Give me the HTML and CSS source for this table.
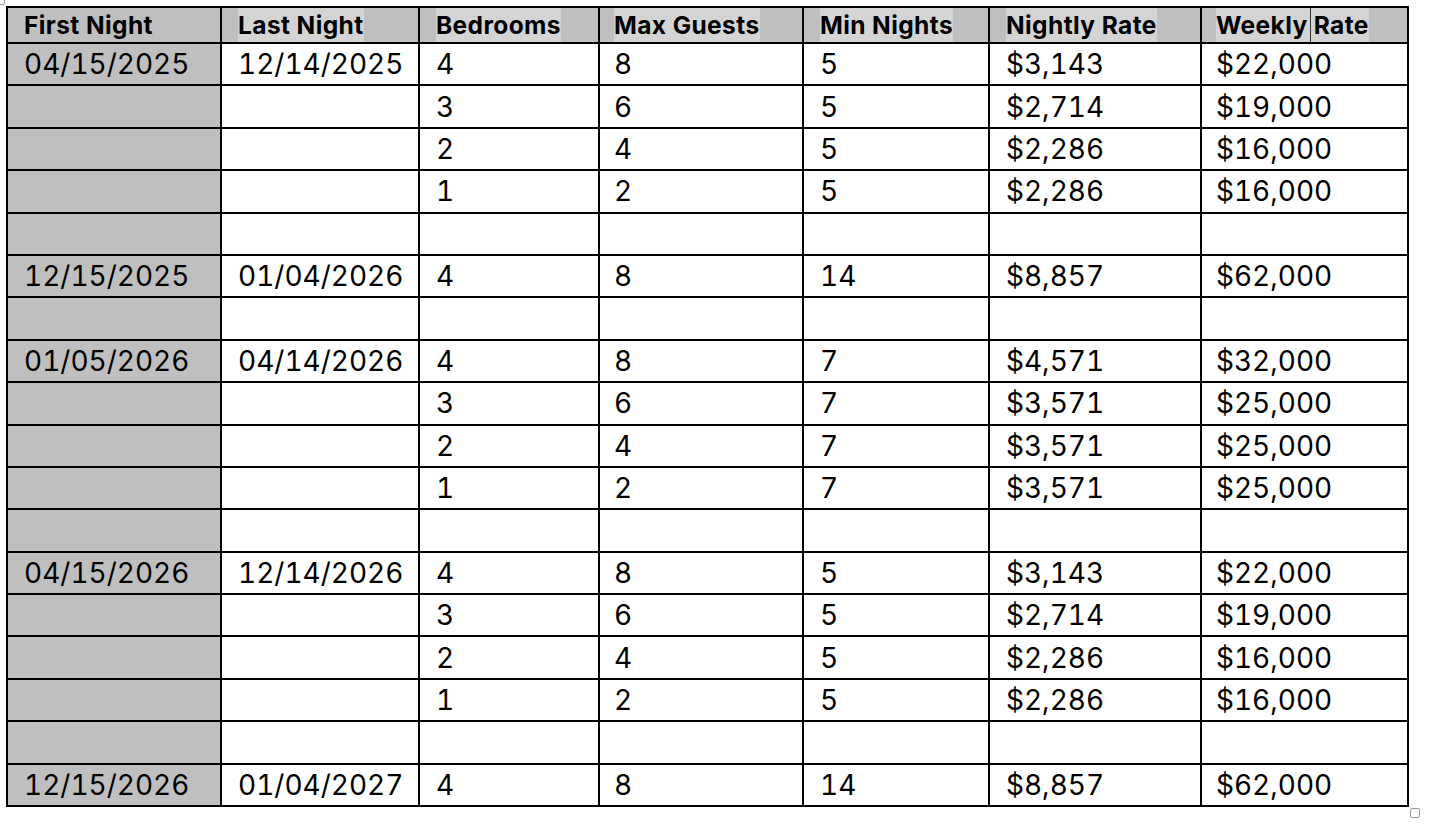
FILE: index.html
```html
<!DOCTYPE html>
<html>
<head>
<meta charset="utf-8">
<link rel="stylesheet" href="styles.css">
</head>
<body>
<div class="doc">
  <span class="handle handle-move"></span>
  <table class="rates">
    <colgroup>
      <col class="c1"><col class="c2"><col class="c3"><col class="c4"><col class="c5"><col class="c6"><col class="c7">
    </colgroup>
    <thead>
      <tr>
        <th>First Night</th>
        <th><span class="hl">Last Night</span></th>
        <th><span class="hl">Bedrooms</span></th>
        <th><span class="hl">Max Guests</span></th>
        <th><span class="hl">Min Nights</span></th>
        <th><span class="hl">Nightly Rate</span></th>
        <th><span class="hl">Weekly<span class="cursor">Rate</span></span></th>
      </tr>
    </thead>
    <tbody>
      <tr><td>04/15/2025</td><td>12/14/2025</td><td>4</td><td>8</td><td>5</td><td>$3,143</td><td>$22,000</td></tr>
      <tr><td></td><td></td><td>3</td><td>6</td><td>5</td><td>$2,714</td><td>$19,000</td></tr>
      <tr><td></td><td></td><td>2</td><td>4</td><td>5</td><td>$2,286</td><td>$16,000</td></tr>
      <tr><td></td><td></td><td>1</td><td>2</td><td>5</td><td>$2,286</td><td>$16,000</td></tr>
      <tr><td></td><td></td><td></td><td></td><td></td><td></td><td></td></tr>
      <tr><td>12/15/2025</td><td>01/04/2026</td><td>4</td><td>8</td><td>14</td><td>$8,857</td><td>$62,000</td></tr>
      <tr><td></td><td></td><td></td><td></td><td></td><td></td><td></td></tr>
      <tr><td>01/05/2026</td><td>04/14/2026</td><td>4</td><td>8</td><td>7</td><td>$4,571</td><td>$32,000</td></tr>
      <tr><td></td><td></td><td>3</td><td>6</td><td>7</td><td>$3,571</td><td>$25,000</td></tr>
      <tr><td></td><td></td><td>2</td><td>4</td><td>7</td><td>$3,571</td><td>$25,000</td></tr>
      <tr><td></td><td></td><td>1</td><td>2</td><td>7</td><td>$3,571</td><td>$25,000</td></tr>
      <tr><td></td><td></td><td></td><td></td><td></td><td></td><td></td></tr>
      <tr><td>04/15/2026</td><td>12/14/2026</td><td>4</td><td>8</td><td>5</td><td>$3,143</td><td>$22,000</td></tr>
      <tr><td></td><td></td><td>3</td><td>6</td><td>5</td><td>$2,714</td><td>$19,000</td></tr>
      <tr><td></td><td></td><td>2</td><td>4</td><td>5</td><td>$2,286</td><td>$16,000</td></tr>
      <tr><td></td><td></td><td>1</td><td>2</td><td>5</td><td>$2,286</td><td>$16,000</td></tr>
      <tr><td></td><td></td><td></td><td></td><td></td><td></td><td></td></tr>
      <tr><td>12/15/2026</td><td>01/04/2027</td><td>4</td><td>8</td><td>14</td><td>$8,857</td><td>$62,000</td></tr>
    </tbody>
  </table>
  <span class="handle handle-resize"></span>
</div>
</body>
</html>
```

FILE: styles.css
```css
html, body {
  margin: 0;
  padding: 0;
  background: #ffffff;
}

.doc {
  position: relative;
  padding: 6px 0 0 6px;
  height: 826px;
}

.rates {
  border-collapse: collapse;
  table-layout: fixed;
  width: 1403px;
  font-family: Inter, "Liberation Sans", sans-serif;
  color: #000;
}

.c1 { width: 214px; }
.c2 { width: 198px; }
.c3 { width: 180px; }
.c4 { width: 204px; }
.c5 { width: 186px; }
.c6 { width: 212px; }
.c7 { width: 207px; }

.rates th,
.rates td {
  border: 2px solid #000;
  padding: 0 0 0 16px;
  text-align: left;
  vertical-align: middle;
  white-space: nowrap;
  overflow: hidden;
}

.rates th {
  height: 34px;
  background: #bfbfbf;
  font-size: 24.5px;
  font-weight: 700;
  line-height: 34px;
  letter-spacing: 0.4px;
}

.rates td {
  height: 40.4px;
  font-size: 28px;
  font-weight: 400;
  line-height: 1;
  font-variant-numeric: tabular-nums;
}

.rates td:first-child {
  background: #bfbfbf;
}

.rates th:nth-child(4),
.rates td:nth-child(4),
.rates th:nth-child(7),
.rates td:nth-child(7) {
  padding-left: 14px;
}

.hl {
  display: inline-block;
  background: #d4d4d4;
  height: 34px;
  line-height: 34px;
}

.cursor {
  display: inline-block;
  border-left: 1px solid #333;
  margin-left: 2px;
  padding-left: 3px;
  height: 34px;
}

.handle {
  position: absolute;
  width: 8px;
  height: 8px;
  border: 1px solid #9a9a9a;
  border-radius: 2px;
  background: #fff;
}

.handle-move {
  left: -5px;
  top: -5px;
}

.handle-resize {
  left: 1410px;
  top: 808px;
}
```
